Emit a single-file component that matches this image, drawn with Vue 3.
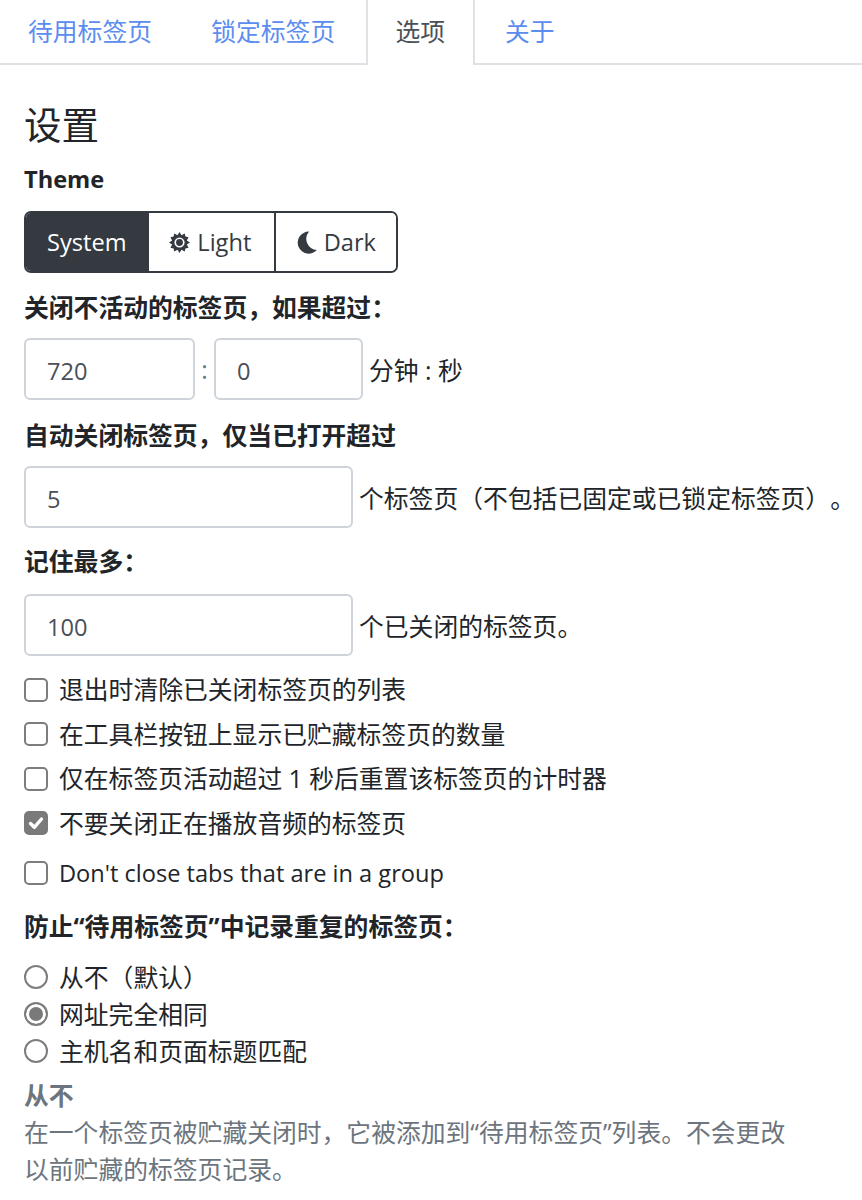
<template>
  <div class="page">
    <!-- 顶部标签 -->
    <nav class="tabs">
      <a v-for="t in tabs" :key="t.name" class="tab" :class="{ active: t.active }">{{ t.name }}</a>
    </nav>

    <main class="content">
      <h2 class="title">设置</h2>

      <label class="field-label theme-label">Theme</label>
      <div class="btn-group">
        <button class="btn btn-system active">System</button>
        <button class="btn btn-light">
          <svg class="icon" viewBox="0 0 16 16">
            <path fill="currentColor" d="M8 0 9.5 2.4 12 1.1l.5 2.4 2.4.5-1.3 2.5L16 8l-2.4 1.5 1.3 2.5-2.4.5-.5 2.4-2.5-1.3L8 16l-1.5-2.4L4 14.9l-.5-2.4-2.4-.5 1.3-2.5L0 8l2.4-1.5L1.1 4l2.4-.5L4 1.1l2.5 1.3L8 0z" />
            <circle cx="8" cy="8" r="3.9" fill="#fff" />
            <circle cx="8" cy="8" r="2.6" fill="currentColor" />
          </svg>
          Light
        </button>
        <button class="btn btn-dark">
          <svg class="icon moon" viewBox="0 0 16 18" fill="currentColor">
            <path d="M9.5 .3A8.8 8.8 0 1 0 15.9 15 9 9 0 0 1 9.5 .3z" />
          </svg>
          Dark
        </button>
      </div>

      <label class="field-label">关闭不活动的标签页，如果超过：</label>
      <div class="input-row">
        <input class="num w-min" value="720" />
        <span class="sep">:</span>
        <input class="num w-sec" value="0" />
        <span class="suffix">分钟 : 秒</span>
      </div>

      <label class="field-label second">自动关闭标签页，仅当已打开超过</label>
      <div class="input-row">
        <input class="num w-wide" value="5" />
        <span class="suffix">个标签页（不包括已固定或已锁定标签页）。</span>
      </div>

      <label class="field-label third">记住最多：</label>
      <div class="input-row">
        <input class="num w-wide" value="100" />
        <span class="suffix">个已关闭的标签页。</span>
      </div>

      <div class="checks">
        <div v-for="c in checks" :key="c.text" class="check-row" :class="{ spaced: c.spaced }">
          <span class="box" :class="{ on: c.on }">
            <svg v-if="c.on" viewBox="0 0 20 20" width="20" height="20">
              <path d="M4.5 10.5l3.8 3.8L15.5 6" fill="none" stroke="#fff" stroke-width="3.4" stroke-linecap="round" stroke-linejoin="round" />
            </svg>
          </span>
          <span :class="{ latin: c.spaced }">{{ c.text }}</span>
        </div>
      </div>

      <label class="field-label dup-label">防止“待用标签页”中记录重复的标签页：</label>
      <div class="radios">
        <div v-for="r in radios" :key="r.text" class="radio-row">
          <span class="dot" :class="{ on: r.on }"></span>
          <span>{{ r.text }}</span>
        </div>
      </div>

      <div class="help">
        <strong>从不</strong>
        <p>在一个标签页被贮藏关闭时，它被添加到“待用标签页”列表。不会更改以前贮藏的标签页记录。</p>
      </div>
    </main>
  </div>
</template>

<script setup>
const tabs = [
  { name: '待用标签页' },
  { name: '锁定标签页' },
  { name: '选项', active: true },
  { name: '关于' }
];

const checks = [
  { text: '退出时清除已关闭标签页的列表' },
  { text: '在工具栏按钮上显示已贮藏标签页的数量' },
  { text: '仅在标签页活动超过 1 秒后重置该标签页的计时器' },
  { text: '不要关闭正在播放音频的标签页', on: true },
  { text: "Don't close tabs that are in a group", spaced: true }
];

const radios = [
  { text: '从不（默认）' },
  { text: '网址完全相同', on: true },
  { text: '主机名和页面标题匹配' }
];
</script>

<style>
body {
  background: #fff;
}
</style>

<style scoped>
.page {
  width: 862px;
  height: 1200px;
  overflow: hidden;
  font-family: "Open Sans", "Noto Sans CJK SC", sans-serif;
  font-size: 24.8px;
  line-height: 37px;
  color: #212529;
  text-spacing-trim: space-all;
}

.latin {
  font-size: 23.6px;
}

.tabs {
  display: flex;
  height: 65px;
  border-bottom: 2px solid #dee2e6;
  box-sizing: border-box;
}

.tab {
  padding: 13px 28px 0;
  margin-right: 3.2px;
  color: #5b8def;
  box-sizing: border-box;
  height: 65px;
}

.tab.active {
  color: #495057;
  background: #fff;
  border: solid #dee2e6;
  border-width: 0 2px;
  padding: 13px 28px 0 27px;
  margin-right: 2px;
}

.content {
  padding: 0 0 0 24px;
}

.title {
  margin: 0;
  padding-top: 37px;
  font-size: 37.5px;
  line-height: 45px;
  font-weight: 400;
}

.field-label {
  display: block;
  font-weight: 700;
  line-height: 36px;
  margin-top: 16px;
  margin-bottom: 13px;
}

.theme-label {
  margin-top: 14px;
  margin-bottom: 14px;
  font-size: 23.6px;
}

.field-label.second {
  margin-top: 17px;
}

.field-label.third {
  margin-top: 15px;
  margin-bottom: 15px;
}

.btn-group {
  display: flex;
  width: 374px;
  height: 62px;
  box-sizing: border-box;
  border: 2px solid #343a40;
  border-radius: 7px;
  overflow: hidden;
}

.btn {
  display: flex;
  align-items: center;
  gap: 7px;
  font: inherit;
  font-size: 23.6px;
  color: #343a40;
  background: #fff;
  border: 0;
  border-left: 2px solid #343a40;
  padding: 0;
}

.btn-system {
  width: 122px;
  padding-left: 21px;
  border-left: 0;
}

.btn-light {
  width: 127px;
  padding-left: 20px;
}

.btn-dark {
  width: 123px;
  padding-left: 21px;
}

.btn.active {
  background: #343a40;
  color: #fff;
}

.icon {
  width: 21px;
  height: 21px;
}

.icon.moon {
  width: 20px;
  height: 23px;
}

.input-row {
  display: flex;
  align-items: center;
  height: 62px;
}

.num {
  box-sizing: border-box;
  height: 62px;
  padding: 3px 21px 0;
  font: inherit;
  font-size: 23.6px;
  color: #495057;
  background: #fff;
  border: 2px solid #ced4da;
  border-radius: 6px;
  outline: none;
}

.w-min {
  width: 171px;
}

.w-sec {
  width: 149px;
}

.w-wide {
  width: 329px;
}

.sep {
  width: 19px;
  text-align: center;
  color: #6c757d;
}

.suffix {
  margin-left: 6px;
  padding-top: 2px;
  white-space: nowrap;
}

.checks {
  margin-top: 15px;
}

.check-row,
.radio-row {
  display: flex;
  align-items: center;
  gap: 11px;
  height: 37px;
}

.check-row {
  margin-bottom: 7.5px;
}

.check-row.spaced {
  margin-top: 13px;
  margin-bottom: 0;
}

.box {
  flex: none;
  width: 24px;
  height: 24px;
  box-sizing: border-box;
  border: 2px solid #7d7d7d;
  border-radius: 5px;
  background: #fff;
  display: flex;
  align-items: center;
  justify-content: center;
}

.box.on {
  background: #7a7a7a;
  border-color: #7a7a7a;
}

.dup-label {
  margin-top: 16px;
  margin-bottom: 15px;
}

.dot {
  flex: none;
  width: 24px;
  height: 24px;
  box-sizing: border-box;
  border: 2px solid #7d7d7d;
  border-radius: 50%;
  background: #fff;
}

.dot.on {
  background: #7a7a7a;
  box-shadow: inset 0 0 0 3px #fff;
}

.help {
  margin-top: 7px;
  color: #6c757d;
  width: 780px;
}

.help strong {
  display: block;
}

.help p {
  margin: 0;
}
</style>
